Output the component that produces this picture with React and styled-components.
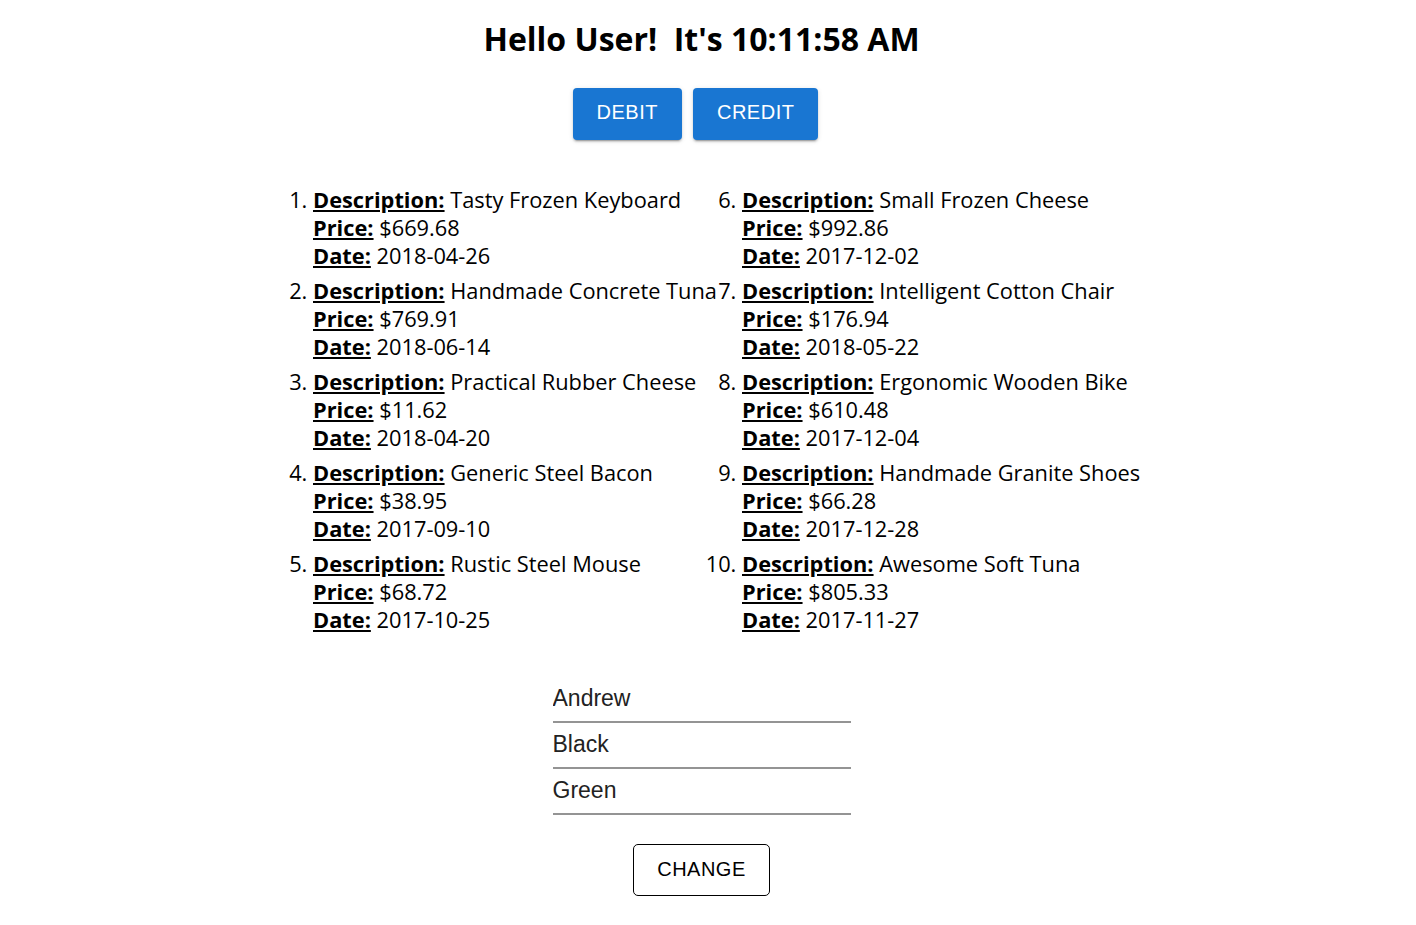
import React from 'react'
import styled, {createGlobalStyle} from 'styled-components'

const transactions = [
    {description: 'Tasty Frozen Keyboard', price: '$669.68', date: '2018-04-26'},
    {description: 'Handmade Concrete Tuna', price: '$769.91', date: '2018-06-14'},
    {description: 'Practical Rubber Cheese', price: '$11.62', date: '2018-04-20'},
    {description: 'Generic Steel Bacon', price: '$38.95', date: '2017-09-10'},
    {description: 'Rustic Steel Mouse', price: '$68.72', date: '2017-10-25'},
    {description: 'Small Frozen Cheese', price: '$992.86', date: '2017-12-02'},
    {description: 'Intelligent Cotton Chair', price: '$176.94', date: '2018-05-22'},
    {description: 'Ergonomic Wooden Bike', price: '$610.48', date: '2017-12-04'},
    {description: 'Handmade Granite Shoes', price: '$66.28', date: '2017-12-28'},
    {description: 'Awesome Soft Tuna', price: '$805.33', date: '2017-11-27'},
]

const App = () => {
    return (
        <Page>
            <GlobalStyle />
            <Greeting>Hello User!&nbsp; It's 10:11:58 AM</Greeting>
            <ButtonRow>
                <ContainedButton>Debit</ContainedButton>
                <ContainedButton>Credit</ContainedButton>
            </ButtonRow>
            <List>
                {transactions.map((t, i) => (
                    <Item key={i}>
                        <Line><Label>Description:</Label> {t.description}</Line>
                        <Line><Label>Price:</Label> {t.price}</Line>
                        <Line><Label>Date:</Label> {t.date}</Line>
                    </Item>
                ))}
            </List>
            <Form>
                <Field defaultValue='Andrew' />
                <Field defaultValue='Black' />
                <Field defaultValue='Green' />
                <OutlinedButton>Change</OutlinedButton>
            </Form>
        </Page>
    )
}

export default App

const GlobalStyle = createGlobalStyle`
body {
    margin: 0;
    background: #fff;
    font-family: "Open Sans", "Noto Sans", sans-serif;
    color: #000;
}
`;

const Page = styled.div`
display: flex;
flex-direction: column;
align-items: center;
padding-top: 17px;
padding-right: 13px;
`;

const Greeting = styled.h1`
margin: 0;
font-size: 32px;
line-height: 44px;
font-weight: 700;
`;

const ButtonRow = styled.div`
display: flex;
gap: 11px;
margin-top: 27px;
margin-right: 12px;
`;

const ContainedButton = styled.button`
height: 52px;
padding: 0 24px 3px;
border: none;
border-radius: 4px;
background: #1976d2;
color: #fff;
font-family: "Liberation Sans", Arial, sans-serif;
font-size: 20px;
letter-spacing: 0.5px;
text-transform: uppercase;
box-shadow: 0 3px 1px -2px rgba(0,0,0,0.2), 0 2px 2px 0 rgba(0,0,0,0.14), 0 1px 5px 0 rgba(0,0,0,0.12);
cursor: pointer;
`;

const List = styled.ol`
display: grid;
grid-template-columns: 429px 400px;
grid-template-rows: repeat(5, auto);
grid-auto-flow: column;
row-gap: 7px;
margin: 46px 0 0 0;
padding: 0 0 0 313px;
align-self: flex-start;
font-size: 21.8px;
line-height: 28px;
`;

const Item = styled.li`
white-space: nowrap;
`;

const Line = styled.div``;

const Label = styled.span`
font-weight: 700;
text-decoration: underline;
`;

const Form = styled.div`
display: flex;
flex-direction: column;
align-items: center;
margin-top: 43px;
`;

const Field = styled.input`
width: 298px;
height: 46px;
box-sizing: border-box;
padding: 6px 0 8px;
border: none;
border-bottom: 2px solid #949494;
outline: none;
font-family: "Liberation Sans", Arial, sans-serif;
font-size: 23px;
color: #222;
background: transparent;
`;

const OutlinedButton = styled.button`
margin-top: 29px;
height: 52px;
padding: 0 23px 2px;
border: 1px solid #000;
border-radius: 5px;
background: #fff;
color: #000;
font-family: "Liberation Sans", Arial, sans-serif;
font-size: 20px;
letter-spacing: 0.5px;
text-transform: uppercase;
cursor: pointer;
`;
